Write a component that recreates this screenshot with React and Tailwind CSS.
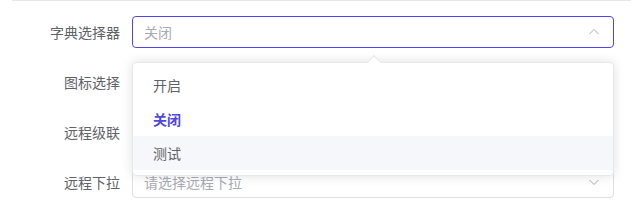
import React from 'react';

const FONT = { fontFamily: '"Noto Sans CJK SC", "Noto Sans", sans-serif' };

const Chevron = ({ up }) => (
    <svg width="12" height="12" viewBox="0 0 12 12" className="shrink-0">
        <polyline
            points={up ? "1.5,8 6,3.5 10.5,8" : "1.5,4 6,8.5 10.5,4"}
            fill="none"
            stroke="#a8abb2"
            strokeWidth="1"
        />
    </svg>
);

const OPTIONS = [
    { label: '开启' },
    { label: '关闭', selected: true },
    { label: '测试', hover: true },
];

const Row = ({ label, children }) => (
    <div className="flex items-center h-8 mb-[18px]">
        <div className="w-[120px] pr-3 text-right text-sm leading-8 text-[#606266] shrink-0">{label}</div>
        <div className="flex-1 relative">{children}</div>
    </div>
);

const Input = ({ placeholder, up, active }) => (
    <div
        className={
            "h-8 rounded flex items-center justify-between pl-[11px] pr-[13px] bg-white border " +
            (active ? "border-[#4f46e5]" : "border-[#dcdfe6]")
        }
    >
        <span className="text-sm text-[#a8abb2]">{placeholder}</span>
        <Chevron up={up} />
    </div>
);

export default function App() {
    return (
        <div className="w-[643px] h-[213px] bg-white overflow-hidden px-3" style={FONT}>
            <div className="border-t border-[#e4e7ed] pt-[15px] pr-[17px]">
                <Row label="字典选择器">
                    <Input placeholder="关闭" up active />
                    <div className="absolute left-0 top-[46px] w-full z-10 bg-white border border-[#e4e7ed] rounded py-[5px] shadow-[0_0_12px_rgba(0,0,0,0.12)]">
                        <div className="absolute -top-[6px] left-[236px] w-[10px] h-[10px] bg-white border-t border-l border-[#e4e7ed] rotate-45" />
                        {OPTIONS.map((o) => (
                            <div
                                key={o.label}
                                className={
                                    "h-[34px] flex items-center px-5 text-sm " +
                                    (o.selected ? "text-[#4f46e5] font-bold " : "text-[#606266] ") +
                                    (o.hover ? "bg-[#f5f7fa]" : "")
                                }
                            >
                                {o.label}
                            </div>
                        ))}
                    </div>
                </Row>
                <Row label="图标选择">
                    <Input />
                </Row>
                <Row label="远程级联">
                    <Input />
                </Row>
                <Row label="远程下拉">
                    <Input placeholder="请选择远程下拉" />
                </Row>
            </div>
        </div>
    );
}
